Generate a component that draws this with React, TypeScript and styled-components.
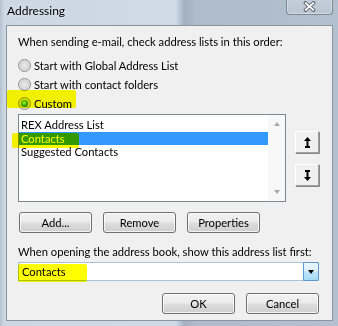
import React from "react";
import styled, { createGlobalStyle, css } from "styled-components";

const Global = createGlobalStyle`
  html, body { margin: 0; padding: 0; }
  body { font-family: Lato, "Noto Sans", sans-serif; background: #b9c6d3; }
  * { box-sizing: border-box; }
`;

const Frame = styled.div`
  position: relative;
  width: 338px;
  height: 326px;
  display: flex;
  flex-direction: column;
  padding: 0 5px 5px 6px;
  background: linear-gradient(
    90deg,
    #b4c0cc 0px,
    #cbd7e3 4px,
    #cfdae6 52%,
    #a2b0bf 54.5%,
    #aebbc9 58%,
    #b3c0cd 100%
  );
  overflow: hidden;
`;

const TitleBar = styled.div`
  height: 25px;
  display: flex;
  justify-content: space-between;
  align-items: flex-start;
  padding-left: 1px;
`;

const Title = styled.div`
  font-size: 12px;
  line-height: 16px;
  padding-top: 3px;
  color: #000;
  text-shadow: 0 0 6px rgba(255, 255, 255, 0.7);
`;

const CloseButton = styled.div`
  width: 47px;
  height: 16px;
  margin-top: -1px;
  border: 1px solid #7c8794;
  border-top: none;
  border-radius: 0 0 4px 4px;
  background: linear-gradient(#c3ced9, #b9c5d1);
  box-shadow: inset 0 0 0 1px rgba(255, 255, 255, 0.35);
  display: flex;
  align-items: center;
  justify-content: center;
`;

const Client = styled.div`
  flex: 1;
  background: #f0f0f0;
  border: 1px solid #8a949f;
  padding: 8px 13px 0 11px;
  display: flex;
  flex-direction: column;
  font-size: 11.2px;
  color: #000;
`;

const Label = styled.div<{ $mt?: number }>`
  line-height: 16px;
  height: 16px;
  white-space: nowrap;
  margin-top: ${(p) => p.$mt ?? 0}px;
`;

const RadioGroup = styled.div`
  margin-top: 6px;
  display: flex;
  flex-direction: column;
`;

const RadioRow = styled.div`
  height: 19px;
  display: flex;
  align-items: center;
  gap: 3px;
  white-space: nowrap;
`;

const Radio = styled.span<{ $checked?: boolean }>`
  width: 13px;
  height: 13px;
  border-radius: 50%;
  border: 1px solid #8e8f8f;
  background: radial-gradient(circle at 50% 50%, #ebebeb 0, #d6d6d6 55%, #f3f3f3 100%);
  display: flex;
  align-items: center;
  justify-content: center;
  flex-shrink: 0;
  ${(p) =>
    p.$checked &&
    css`
      &::after {
        content: "";
        width: 7px;
        height: 7px;
        border-radius: 50%;
        background: radial-gradient(circle at 45% 40%, #b8f59c 0, #4fc12f 35%, #13790f 75%, #0b4d0b 100%);
      }
    `}
`;

const ListArea = styled.div`
  margin-top: 1px;
  display: flex;
  gap: 9px;
`;

const ListBox = styled.div`
  width: 269px;
  height: 88px;
  border: 1px solid #828790;
  background: #fff;
  display: flex;
`;

const Items = styled.div`
  flex: 1;
  padding-top: 3px;
  display: flex;
  flex-direction: column;
`;

const Item = styled.div<{ $selected?: boolean }>`
  height: 13.5px;
  line-height: 13.5px;
  padding-left: 2px;
  white-space: nowrap;
  background: ${(p) => (p.$selected ? "#3399ff" : "transparent")};
  color: ${(p) => (p.$selected ? "#fff" : "#000")};
`;

const ScrollBar = styled.div`
  width: 17px;
  background: #f8f8f8;
  display: flex;
  flex-direction: column;
  justify-content: space-between;
  align-items: center;
  padding: 7px 0 7px;
`;

const Arrow = styled.span<{ $dir: "up" | "down" }>`
  width: 0;
  height: 0;
  border-left: 3.5px solid transparent;
  border-right: 3.5px solid transparent;
  ${(p) =>
    p.$dir === "up"
      ? css`border-bottom: 4px solid #a8a8a8;`
      : css`border-top: 4px solid #a8a8a8;`}
`;

const MoveButtons = styled.div`
  padding-top: 17px;
  display: flex;
  flex-direction: column;
  gap: 11px;
`;

const MoveButton = styled.div`
  width: 24px;
  height: 22px;
  background: #f0f0f0;
  border: 1px solid;
  border-color: #ffffff #a0a0a0 #a0a0a0 #ffffff;
  box-shadow: 1px 1px 0 #8a8a8a;
  display: flex;
  align-items: center;
  justify-content: center;
`;

const ButtonRow = styled.div`
  margin-top: 10px;
  padding-left: 1px;
  display: flex;
  gap: 11px;
`;

const Button = styled.div`
  width: 73px;
  height: 21px;
  border: 1px solid #707070;
  border-radius: 3px;
  background: linear-gradient(#f2f2f2 0%, #ebebeb 48%, #dddddd 52%, #cfcfcf 100%);
  box-shadow: inset 0 0 0 1px rgba(255, 255, 255, 0.75);
  display: flex;
  align-items: center;
  justify-content: center;
  line-height: 16px;
`;

const Combo = styled.div`
  margin-top: 2px;
  height: 19px;
  border: 1px solid #a9c5dc;
  background: #fff;
  display: flex;
  align-items: stretch;
`;

const ComboText = styled.div`
  flex: 1;
  padding-left: 3px;
  line-height: 17px;
`;

const ComboButton = styled.div`
  width: 16px;
  margin: -1px -1px -1px 0;
  border: 1px solid #5c9ad0;
  border-radius: 0 2px 2px 0;
  background: linear-gradient(#eaf6fd 0%, #d9f0fc 48%, #bee6fd 52%, #a7d9f5 100%);
  display: flex;
  align-items: center;
  justify-content: center;
  &::after {
    content: "";
    border-left: 3.5px solid transparent;
    border-right: 3.5px solid transparent;
    border-top: 4px solid #000;
  }
`;

const Footer = styled.div`
  margin-top: 12px;
  display: flex;
  justify-content: flex-end;
  gap: 11px;
`;

const Highlight = styled.div<{ $x: number; $y: number; $w: number; $h: number }>`
  position: absolute;
  left: ${(p) => p.$x}px;
  top: ${(p) => p.$y}px;
  width: ${(p) => p.$w}px;
  height: ${(p) => p.$h}px;
  background: #ffff00;
  mix-blend-mode: multiply;
  border-radius: 2px;
  pointer-events: none;
`;

const UpIcon = () => (
  <svg width="7" height="11" viewBox="0 0 7 11">
    <polygon points="0,4 3.5,0 7,4" fill="#000" />
    <rect x="2.5" y="3" width="2" height="7" fill="#000" />
    <rect x="1" y="9" width="5" height="2" fill="#000" />
  </svg>
);

const DownIcon = () => (
  <svg width="7" height="11" viewBox="0 0 7 11">
    <rect x="1" y="0" width="5" height="2" fill="#000" />
    <rect x="2.5" y="1" width="2" height="7" fill="#000" />
    <polygon points="0,7 3.5,11 7,7" fill="#000" />
  </svg>
);

const CloseIcon = () => (
  <svg width="13" height="11" viewBox="0 0 13 11">
    <path d="M2.5 2 L10.5 9 M10.5 2 L2.5 9" stroke="#4a525c" strokeWidth="3.6" strokeLinecap="round" />
    <path d="M2.5 2 L10.5 9 M10.5 2 L2.5 9" stroke="#ffffff" strokeWidth="1.8" strokeLinecap="round" />
  </svg>
);

export default function App() {
  return (
    <>
      <Global />
      <Frame>
        <TitleBar>
          <Title>Addressing</Title>
          <CloseButton>
            <CloseIcon />
          </CloseButton>
        </TitleBar>
        <Client>
          <Label>When sending e-mail, check address lists in this order:</Label>
          <RadioGroup>
            <RadioRow>
              <Radio />
              <span>Start with Global Address List</span>
            </RadioRow>
            <RadioRow>
              <Radio />
              <span>Start with contact folders</span>
            </RadioRow>
            <RadioRow>
              <Radio $checked />
              <span>Custom</span>
            </RadioRow>
          </RadioGroup>
          <ListArea>
            <ListBox>
              <Items>
                <Item>REX Address List</Item>
                <Item $selected>Contacts</Item>
                <Item>Suggested Contacts</Item>
              </Items>
              <ScrollBar>
                <Arrow $dir="up" />
                <Arrow $dir="down" />
              </ScrollBar>
            </ListBox>
            <MoveButtons>
              <MoveButton>
                <UpIcon />
              </MoveButton>
              <MoveButton>
                <DownIcon />
              </MoveButton>
            </MoveButtons>
          </ListArea>
          <ButtonRow>
            <Button>Add...</Button>
            <Button>Remove</Button>
            <Button>Properties</Button>
          </ButtonRow>
          <Label $mt={11}>When opening the address book, show this address list first:</Label>
          <Combo>
            <ComboText>Contacts</ComboText>
            <ComboButton />
          </Combo>
          <Footer>
            <Button>OK</Button>
            <Button>Cancel</Button>
          </Footer>
        </Client>
        <Highlight $x={7} $y={90} $w={69} $h={18} />
        <Highlight $x={12} $y={133} $w={67} $h={15} />
        <Highlight $x={18} $y={264} $w={69} $h={18} />
      </Frame>
    </>
  );
}
